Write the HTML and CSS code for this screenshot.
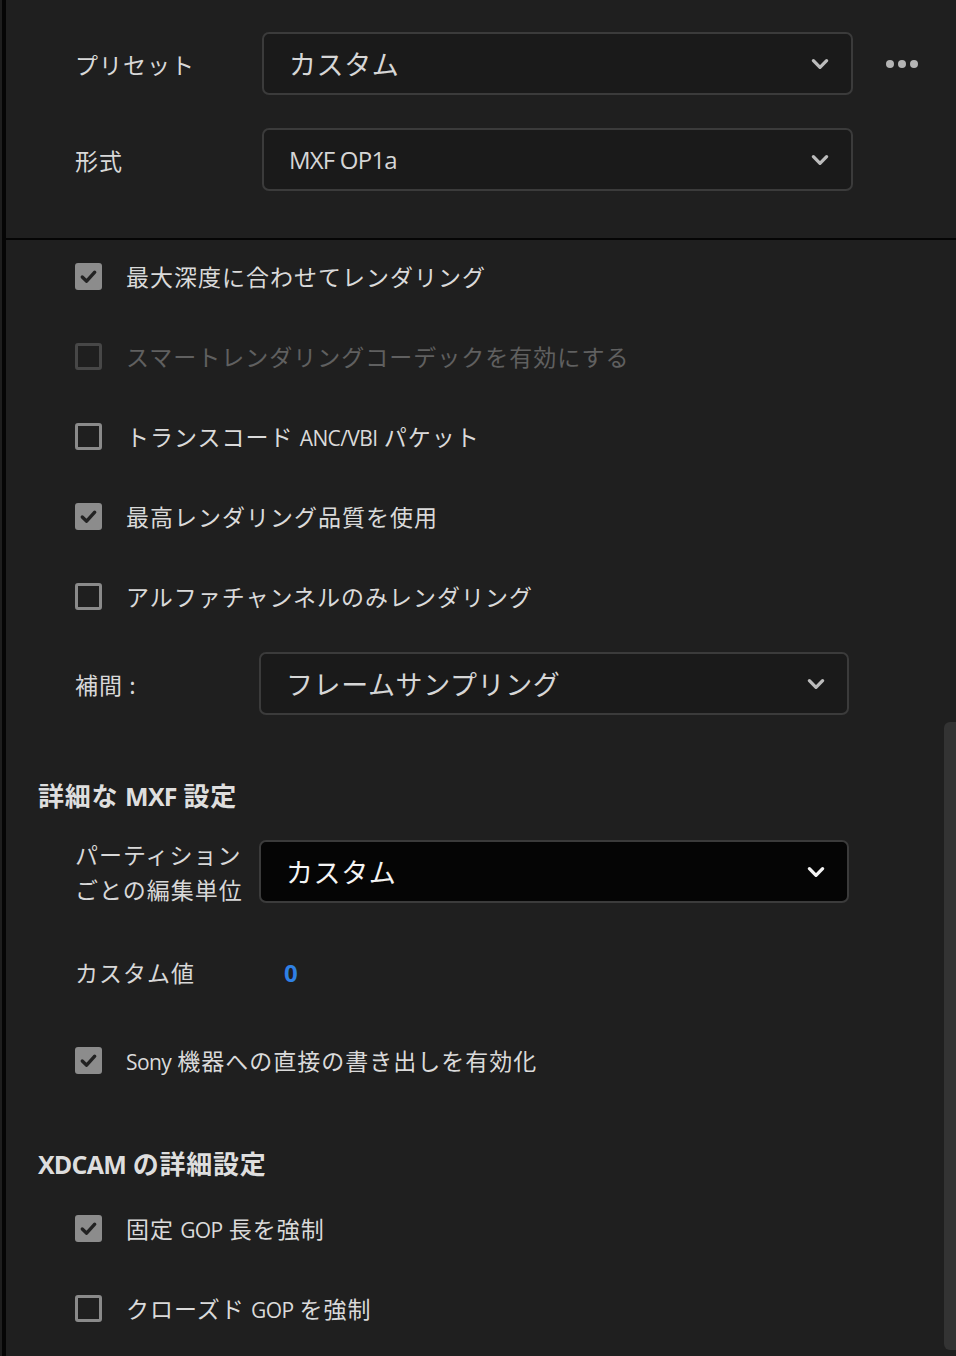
FILE: index.html
```html
<!DOCTYPE html>
<html lang="ja">
<head>
<meta charset="utf-8">
<link rel="stylesheet" href="styles.css">
</head>
<body>
<div class="panel">
  <section class="top">
    <div class="row">
      <div class="label">プリセット</div>
      <div class="select"><span>カスタム</span><svg class="chev" viewBox="0 0 20 20"><path d="M4 7 L10 13 L16 7"/></svg></div>
      <div class="more"><i></i><i></i><i></i></div>
    </div>
    <div class="row">
      <div class="label">形式</div>
      <div class="select"><span class="latin">MXF OP1a</span><svg class="chev" viewBox="0 0 20 20"><path d="M4 7 L10 13 L16 7"/></svg></div>
    </div>
  </section>
  <div class="divider"></div>
  <section class="body">
    <label class="check r1 on"><span class="box"><svg viewBox="0 0 26 26"><path d="M7 13.5 L11.2 17.5 L19 8.8"/></svg></span><span class="txt">最大深度に合わせてレンダリング</span></label>
    <label class="check gap40 disabled"><span class="box"></span><span class="txt">スマートレンダリングコーデックを有効にする</span></label>
    <label class="check gap40"><span class="box"></span><span class="txt">トランスコード <span class="latin">ANC/VBI</span> パケット</span></label>
    <label class="check gap40 on"><span class="box"><svg viewBox="0 0 26 26"><path d="M7 13.5 L11.2 17.5 L19 8.8"/></svg></span><span class="txt">最高レンダリング品質を使用</span></label>
    <label class="check gap40"><span class="box"></span><span class="txt">アルファチャンネルのみレンダリング</span></label>
    <div class="frow interp">
      <div class="label2">補間 :</div>
      <div class="select s2"><span>フレームサンプリング</span><svg class="chev" viewBox="0 0 20 20"><path d="M4 7 L10 13 L16 7"/></svg></div>
    </div>
    <h2 class="head h-mxf">詳細な <span class="latinb">MXF</span> 設定</h2>
    <div class="frow part">
      <div class="label2 two">パーティション<br>ごとの編集単位</div>
      <div class="select s2 dark"><span>カスタム</span><svg class="chev" viewBox="0 0 20 20"><path d="M4 7 L10 13 L16 7"/></svg></div>
    </div>
    <div class="frow cval">
      <div class="label2">カスタム値</div>
      <div class="num">0</div>
    </div>
    <label class="check on sony"><span class="box"><svg viewBox="0 0 26 26"><path d="M7 13.5 L11.2 17.5 L19 8.8"/></svg></span><span class="txt"><span class="latin">Sony</span> 機器への直接の書き出しを有効化</span></label>
    <h2 class="head h-xd"><span class="latinb">XDCAM</span> の詳細設定</h2>
    <label class="check on gop"><span class="box"><svg viewBox="0 0 26 26"><path d="M7 13.5 L11.2 17.5 L19 8.8"/></svg></span><span class="txt">固定 <span class="latin">GOP</span> 長を強制</span></label>
    <label class="check gap40"><span class="box"></span><span class="txt">クローズド <span class="latin">GOP</span> を強制</span></label>
  </section>
  <div class="scrollbar"></div>
</div>
</body>
</html>
```
FILE: styles.css
```css
html, body {
  margin: 0;
  padding: 0;
  background: #1e1e1e;
}
body {
  font-family: "Noto Sans CJK JP", "Noto Sans", sans-serif;
  color: #d6d6d6;
  width: 956px;
  height: 1356px;
  overflow: hidden;
}
.panel {
  position: relative;
  height: 1356px;
  border-left: 4px solid #050505;
  margin-left: 2px;
  box-sizing: border-box;
  background: #1f1f1f;
}
.top {
  padding: 32px 0 47px 69px;
  display: flex;
  flex-direction: column;
  gap: 33px;
}
.row {
  display: flex;
  align-items: center;
  height: 63px;
}
.label {
  width: 187px;
  font-size: 23px;
  letter-spacing: 1px;
  color: #d8d8d8;
}
.select {
  box-sizing: border-box;
  width: 591px;
  height: 63px;
  border: 2px solid #3b3b3b;
  border-radius: 7px;
  background: #1a1a1a;
  display: flex;
  align-items: center;
  justify-content: space-between;
  padding: 0 20px 0 25px;
  font-size: 27px;
  color: #d6d6d6;
}
.select span { letter-spacing: 0.6px; }
.select .latin {
  font-family: "Open Sans", "Noto Sans", sans-serif;
  font-size: 24px;
  letter-spacing: -0.8px;
}
.chev {
  width: 22px;
  height: 22px;
  fill: none;
  stroke: #bcbcbc;
  stroke-width: 3;
  stroke-linecap: round;
  stroke-linejoin: round;
}
.more {
  display: flex;
  gap: 4px;
  margin-left: 33px;
}
.more i {
  display: block;
  width: 8px;
  height: 8px;
  border-radius: 50%;
  background: #b4b4b4;
}
.divider {
  height: 2px;
  background: #050505;
}
.body {
  display: flex;
  flex-direction: column;
  padding-left: 69px;
}
.check {
  display: flex;
  align-items: center;
  height: 40px;
}
.r1 { margin-top: 16px; }
.gap40 { margin-top: 40px; }
.box {
  box-sizing: border-box;
  width: 27px;
  height: 27px;
  border: 3px solid #8a8a8a;
  border-radius: 3px;
  margin-right: 24px;
  flex: none;
  display: flex;
}
.box svg {
  width: 100%;
  height: 100%;
  fill: none;
  stroke: #222222;
  stroke-width: 3.2;
  stroke-linecap: round;
  stroke-linejoin: round;
}
.check.on .box {
  background: #8c8c8c;
  border: none;
}
.check.disabled .box { border-color: #474747; }
.check.disabled .txt { color: #606060; }
.txt {
  font-size: 23px;
  letter-spacing: 1px;
  color: #dadada;
}
.txt .latin {
  font-family: "Open Sans", "Noto Sans", sans-serif;
  font-size: 21px;
  letter-spacing: -0.6px;
}
.frow {
  display: flex;
  align-items: center;
}
.label2 {
  width: 184px;
  font-size: 23px;
  letter-spacing: 1px;
  color: #d8d8d8;
}
.label2.two { line-height: 35px; white-space: nowrap; }
.s2 { width: 590px; }
.interp { margin-top: 36px; height: 63px; }
.head {
  margin: 0;
  font-size: 26px;
  font-weight: bold;
  height: 34px;
  line-height: 34px;
  color: #dedede;
  margin-left: -37px;
  letter-spacing: 0.8px;
}
.latinb {
  font-family: "Open Sans", "Noto Sans", sans-serif;
  font-weight: bold;
  font-size: 25px;
  letter-spacing: -0.8px;
}
.h-mxf { margin-top: 63px; }
.part { margin-top: 28px; height: 63px; }
.select.dark {
  background: #050505;
  color: #f4f4f4;
}
.select.dark .chev { stroke: #f4f4f4; }
.cval { margin-top: 49px; height: 40px; }
.num {
  font-family: "Open Sans", "Noto Sans", sans-serif;
  font-weight: bold;
  font-size: 24px;
  color: #2f80e4;
  margin-left: 25px;
}
.sony { margin-top: 48px; }
.h-xd { margin-top: 66px; }
.gop { margin-top: 28px; }
.scrollbar {
  position: absolute;
  right: 0;
  top: 722px;
  width: 12px;
  height: 628px;
  background: #333333;
  border-radius: 6px 0 0 6px;
}
```
